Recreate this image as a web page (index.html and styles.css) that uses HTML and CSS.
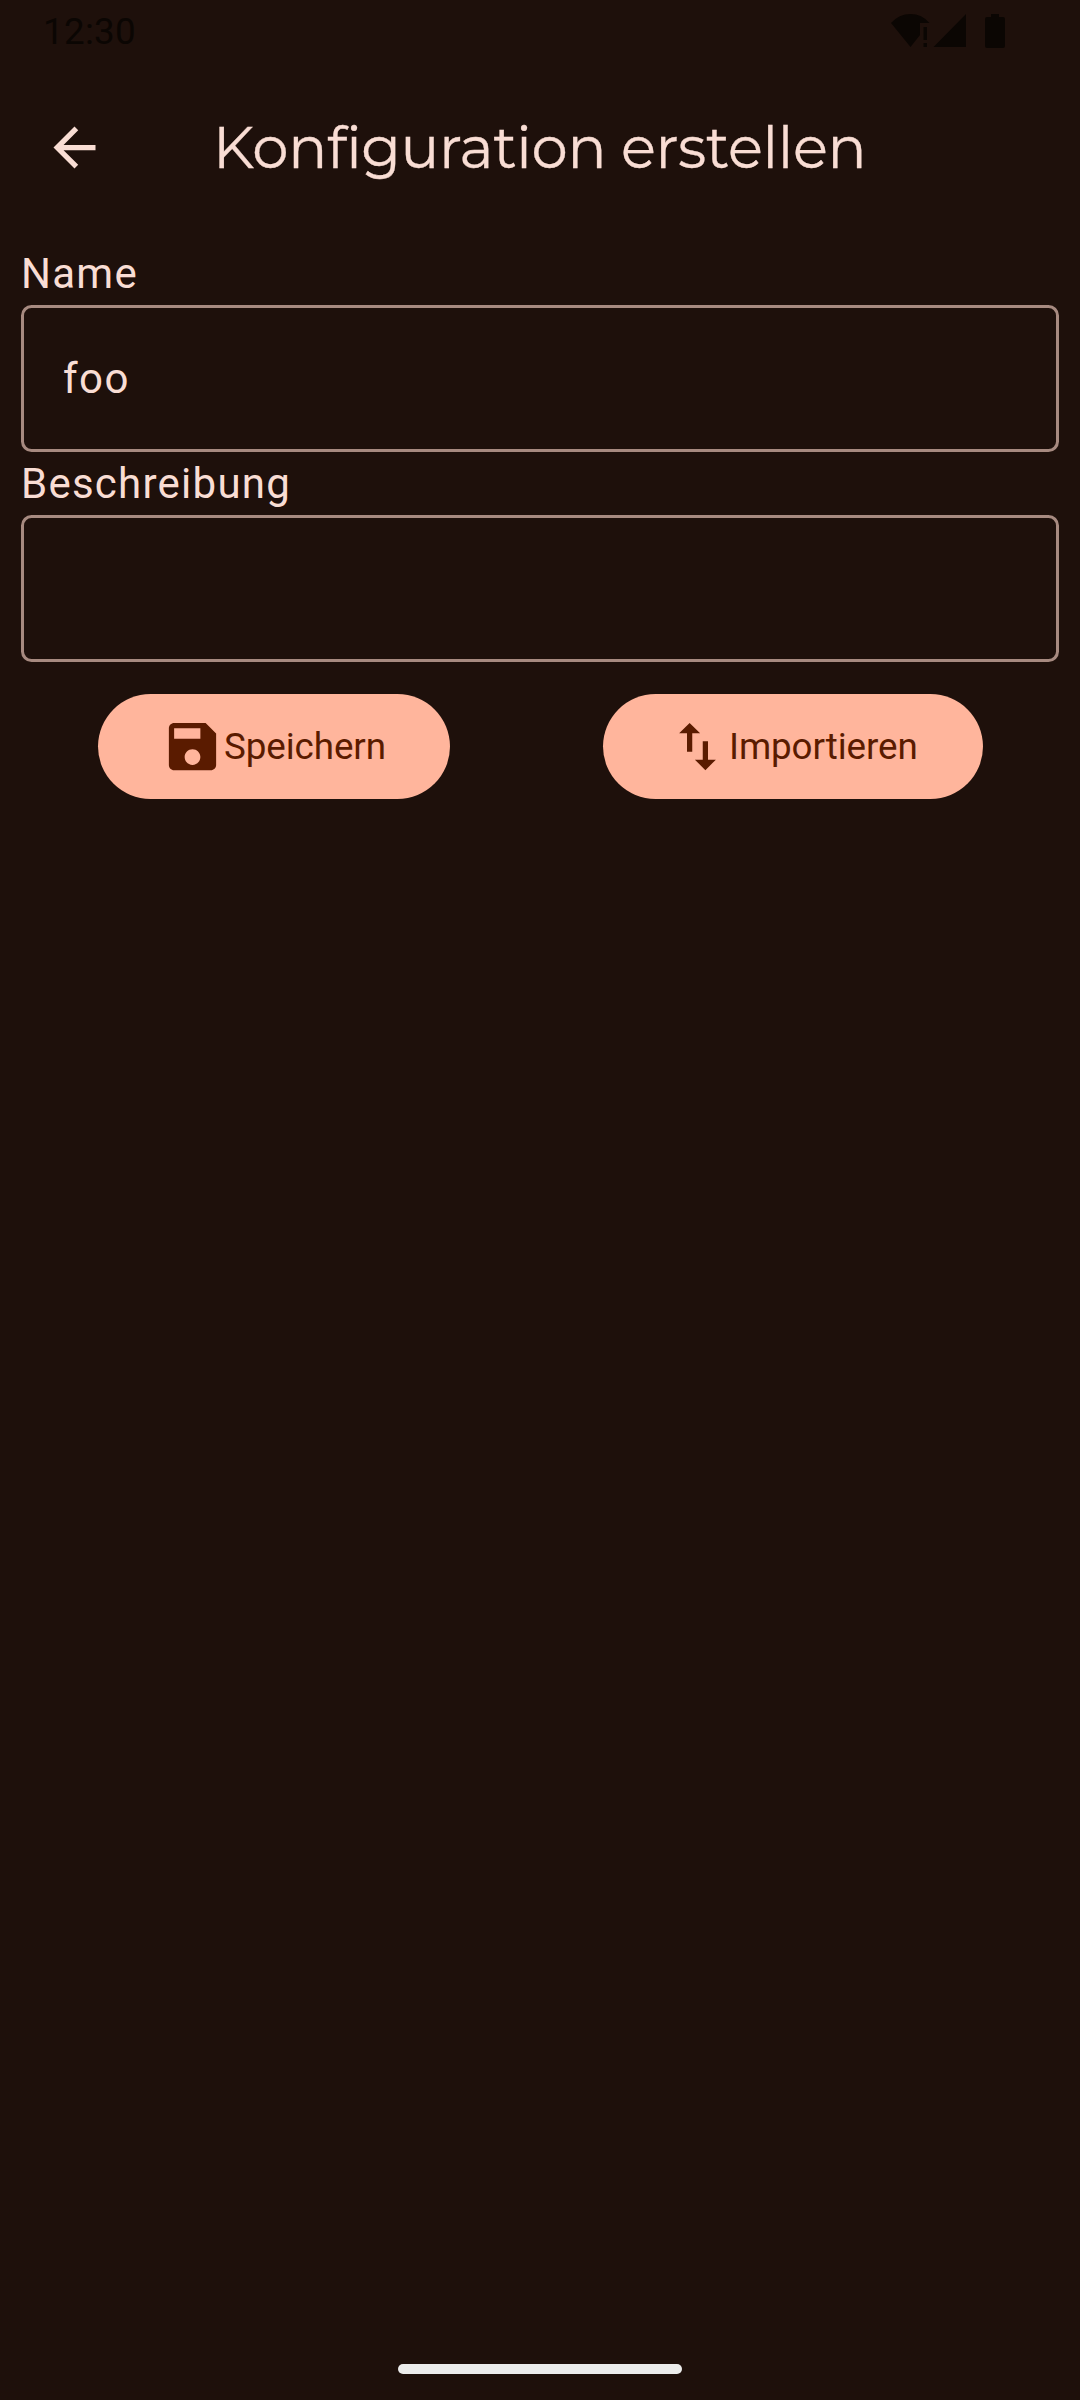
FILE: index.html
```html
<!DOCTYPE html>
<html lang="de">
<head>
<meta charset="utf-8">
<title>Konfiguration erstellen</title>
<link rel="stylesheet" href="styles.css">
</head>
<body>
<div class="screen">
  <header class="status">
    <span class="clock">12:30</span>
    <svg class="status-icons" width="116" height="36" viewBox="890 13 116 36">
      <path d="M891 23Q899 14 910.500 14Q922 14 929.500 23H920V35L910.500 47Z"/>
      <path d="M923.500 27h3.500v13h-3.500zM923.500 43h3.500v4h-3.500zM933.500 47L966 14V47Z"/>
      <path d="M991 14h8v3h4a2 2 0 0 1 2 2v27a2 2 0 0 1-2 2h-16a2 2 0 0 1-2-2V19a2 2 0 0 1 2-2h4z"/>
    </svg>
  </header>
  <div class="appbar">
    <svg class="icon" viewBox="0 0 24 24"><path d="M20 11H7.830l5.590-5.590L12 4l-8 8 8 8 1.410-1.410L7.830 13H20v-2z"/></svg>
    <h1 class="title">Konfiguration erstellen</h1>
  </div>
  <main class="form">
    <label class="label" for="name">Name</label>
    <input class="field" id="name" type="text" value="foo">
    <label class="label" for="description">Beschreibung</label>
    <input class="field" id="description" type="text">
    <div class="actions">
      <button class="button save" type="button">
        <svg class="icon" viewBox="0 0 24 24"><path d="M17 3H5c-1.110 0-2 .9-2 2v14c0 1.100.890 2 2 2h14c1.100 0 2-.9 2-2V7l-4-4zm-5 16c-1.660 0-3-1.340-3-3s1.340-3 3-3 3 1.340 3 3-1.340 3-3 3zm3-10H5V5h10v4z"/></svg>
        <span>Speichern</span>
      </button>
      <button class="button import" type="button">
        <svg class="icon" viewBox="0 0 24 24"><path d="M16 17.010V10h-2v7.010h-3L15 21l4-3.990h-3zM9 3L5 6.990h3V14h2V6.990h3L9 3z"/></svg>
        <span>Importieren</span>
      </button>
    </div>
  </main>
  <div class="home-bar"></div>
</div>
</body>
</html>
```
FILE: styles.css
```css
* { box-sizing: border-box; }

body {
  margin: 0;
  background: #1e100b;
  color: #f9ddd4;
  font-family: Roboto, "Noto Sans", sans-serif;
}

.screen {
  width: 1080px;
  height: 2400px;
  display: flex;
  flex-direction: column;
}

.status {
  height: 63px;
  padding: 10px 74px 0 43px;
  display: flex;
  justify-content: space-between;
  align-items: flex-start;
  color: #0b0603;
}

.clock {
  font-size: 36.75px;
  line-height: 44px;
  letter-spacing: 0.3px;
}

.status-icons {
  margin-top: 3px;
  fill: currentColor;
}

.icon {
  width: 63px;
  height: 63px;
  flex: none;
  fill: currentColor;
}

.appbar {
  height: 168px;
  padding: 0 42px 0 43px;
  display: flex;
  align-items: center;
}

.title {
  margin: 0 0 0 107px;
  font: 400 57.750px/74px Montserrat, Inter, sans-serif;
  letter-spacing: -0.340px;
  -webkit-text-stroke: 0.3px currentColor;
  white-space: nowrap;
}

.form {
  display: flex;
  flex-direction: column;
  padding: 11px 21px 0;
}

.label {
  height: 63px;
  font-size: 42px;
  line-height: 63px;
  letter-spacing: 1.250px;
}

.field {
  height: 147px;
  padding: 0 39px;
  border: 3px solid #a78a80;
  border-radius: 10.500px;
  background: transparent;
  color: inherit;
  font: 42px Roboto, "Noto Sans", sans-serif;
  letter-spacing: 1.500px;
  outline: none;
}

.actions {
  display: flex;
  justify-content: space-between;
  padding: 32px 76px 0 77px;
}

.button {
  height: 105px;
  padding: 0 0 0 63px;
  border: 0;
  border-radius: 53px;
  display: flex;
  align-items: center;
  background: #ffb59c;
  color: #5a1b00;
  font: 36.750px Roboto, "Noto Sans", sans-serif;
  letter-spacing: -0.080px;
}

.save { width: 352px; }
.import { width: 380px; }

.home-bar {
  width: 284px;
  height: 10px;
  margin: auto auto 26px;
  border-radius: 5px;
  background: #ececec;
}
```
